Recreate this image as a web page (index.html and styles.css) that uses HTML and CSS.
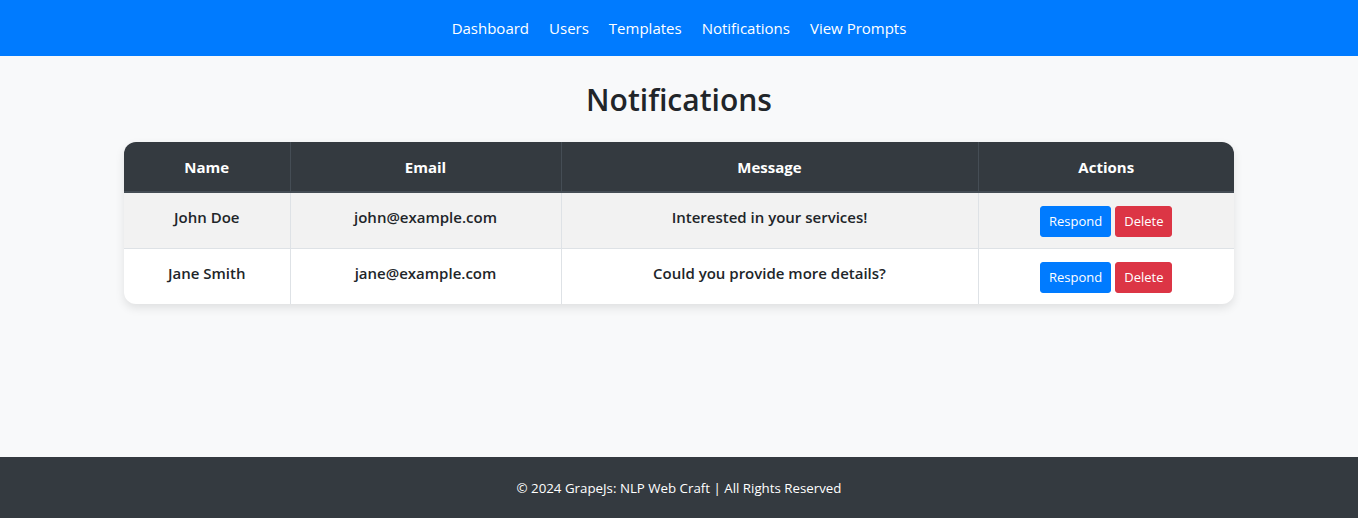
FILE: index.html
```html
<!DOCTYPE html>
<html lang="en">
<head>
<meta charset="utf-8">
<title>Notifications</title>
<link rel="stylesheet" href="styles.css">
</head>
<body>
<nav class="navbar">
  <ul class="nav">
    <li><a href="#">Dashboard</a></li>
    <li><a href="#">Users</a></li>
    <li><a href="#">Templates</a></li>
    <li><a href="#">Notifications</a></li>
    <li><a href="#">View Prompts</a></li>
  </ul>
</nav>
<main class="main">
  <h1 class="title">Notifications</h1>
  <div class="table-wrap">
    <table class="table">
      <colgroup>
        <col class="c-name"><col class="c-email"><col class="c-msg"><col class="c-act">
      </colgroup>
      <thead>
        <tr><th>Name</th><th>Email</th><th>Message</th><th>Actions</th></tr>
      </thead>
      <tbody>
        <tr class="odd">
          <td>John Doe</td><td>john@example.com</td><td>Interested in your services!</td>
          <td class="actions"><div class="btns"><button class="btn btn-primary">Respond</button><button class="btn btn-danger">Delete</button></div></td>
        </tr>
        <tr>
          <td>Jane Smith</td><td>jane@example.com</td><td>Could you provide more details?</td>
          <td class="actions"><div class="btns"><button class="btn btn-primary">Respond</button><button class="btn btn-danger">Delete</button></div></td>
        </tr>
      </tbody>
    </table>
  </div>
</main>
<footer class="footer">© 2024 GrapeJs: NLP Web Craft | All Rights Reserved</footer>
</body>
</html>
```
FILE: styles.css
```css
* { box-sizing: border-box; }
html, body { margin: 0; padding: 0; }
body {
  font-family: "Open Sans", "Noto Sans", "Liberation Sans", sans-serif;
  font-size: 16px;
  line-height: 1.5;
  color: #212529;
  background: #f8f9fa;
  min-height: 100vh;
  display: flex;
  flex-direction: column;
}
.navbar {
  background: #007bff;
  height: 56px;
  display: flex;
  align-items: center;
  justify-content: center;
}
.nav {
  list-style: none;
  margin: 0;
  padding: 0;
  display: flex;
}
.nav a {
  display: block;
  color: #fff;
  text-decoration: none;
  padding: 8px 10px;
  font-size: 15px;
}
.main {
  flex: 1;
  width: 1110px;
  margin: 0 auto;
  padding-top: 25px;
}
.title {
  margin: 0 0 23px;
  text-align: center;
  font-size: 30px;
  font-weight: 600;
  line-height: 38px;
}
.table-wrap {
  border-radius: 12px;
  overflow: hidden;
  box-shadow: 0 4px 10px rgba(0,0,0,0.1);
  background: #fff;
}
.table {
  width: 100%;
  border-collapse: collapse;
  table-layout: fixed;
}
.c-name { width: 166px; }
.c-email { width: 271px; }
.c-msg { width: 417px; }
.c-act { width: 256px; }
.table th, .table td {
  text-align: center;
  vertical-align: top;
  padding: 12px;
  font-size: 15px;
  line-height: 24px;
}
.table th {
  padding-top: 13px;
  background: #343a40;
  color: #fff;
  font-weight: 700;
  border-left: 1px solid #454d55;
  border-bottom: 2px solid #454d55;
}
.table td {
  font-weight: 600;
  border-left: 1px solid #dee2e6;
  border-top: 1px solid #dee2e6;
}
.table th:first-child, .table td:first-child { border-left: 0; }
.table td.actions { padding-top: 13px; padding-bottom: 11px; }
.odd { background: #f2f2f2; }
.btns { display: flex; justify-content: center; gap: 4px; }
.btn {
  font-family: inherit;
  font-size: 13px;
  line-height: 21px;
  height: 31px;
  padding: 4px 8px;
  border: 1px solid transparent;
  border-radius: 3px;
  color: #fff;
  cursor: pointer;
}
.btn-primary { background: #007bff; border-color: #007bff; }
.btn-danger { background: #dc3545; border-color: #dc3545; }
.footer {
  background: #343a40;
  color: #fff;
  text-align: center;
  font-size: 13.3px;
  line-height: 21px;
  padding: 21px 0 19px;
}
```
